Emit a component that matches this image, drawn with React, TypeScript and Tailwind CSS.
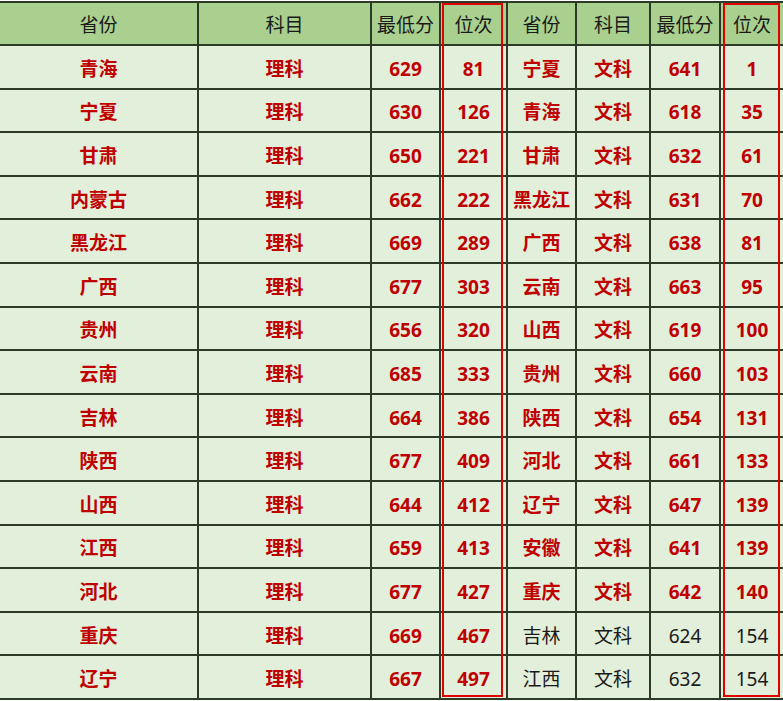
// Admission table: lowest scores and ranks per province, science (理科) and liberal arts (文科).

type Row = [string, string, string, string, string, string, string, string, boolean];

const rows: Row[] = [
  ["青海", "理科", "629", "81", "宁夏", "文科", "641", "1", true],
  ["宁夏", "理科", "630", "126", "青海", "文科", "618", "35", true],
  ["甘肃", "理科", "650", "221", "甘肃", "文科", "632", "61", true],
  ["内蒙古", "理科", "662", "222", "黑龙江", "文科", "631", "70", true],
  ["黑龙江", "理科", "669", "289", "广西", "文科", "638", "81", true],
  ["广西", "理科", "677", "303", "云南", "文科", "663", "95", true],
  ["贵州", "理科", "656", "320", "山西", "文科", "619", "100", true],
  ["云南", "理科", "685", "333", "贵州", "文科", "660", "103", true],
  ["吉林", "理科", "664", "386", "陕西", "文科", "654", "131", true],
  ["陕西", "理科", "677", "409", "河北", "文科", "661", "133", true],
  ["山西", "理科", "644", "412", "辽宁", "文科", "647", "139", true],
  ["江西", "理科", "659", "413", "安徽", "文科", "641", "139", true],
  ["河北", "理科", "677", "427", "重庆", "文科", "642", "140", true],
  ["重庆", "理科", "669", "467", "吉林", "文科", "624", "154", false],
  ["辽宁", "理科", "667", "497", "江西", "文科", "632", "154", false],
];

const headers = ["省份", "科目", "最低分", "位次", "省份", "科目", "最低分", "位次"];
const widths = [198, 173, 69, 67, 69, 74, 70, 63];

const red = "text-[#c00000] font-bold";
const plain = "text-[#1a1a1a] font-normal";

export default function App() {
  return (
    <div
      className="relative w-[783px] h-[701px] bg-white overflow-hidden"
      style={{ fontFamily: '"Noto Sans", "Noto Sans CJK SC", sans-serif' }}
    >
      <table className="mt-[1px] w-[783px] table-fixed border-collapse text-[19px] leading-none">
        <colgroup>
          {widths.map((w, i) => (
            <col key={i} style={{ width: w }} />
          ))}
        </colgroup>
        <thead>
          <tr className="h-[43px] bg-[#a9d08e]">
            {headers.map((h, i) => (
              <th
                key={i}
                className="border-2 border-[#2c3a28] pt-[3px] first:border-l-0 last:border-r-0 font-normal text-[#1a1a1a] text-center"
              >
                {h}
              </th>
            ))}
          </tr>
        </thead>
        <tbody>
          {rows.map((r) => {
            const tone = r[8] ? red : plain;
            return (
              <tr key={r[0] + r[4]} className="h-[43.6px] bg-[#e2efda]">
                {r.slice(0, 8).map((c, i) => (
                  <td
                    key={i}
                    className={`border-2 border-[#2c3a28] pt-[5px] text-center first:border-l-0 last:border-r-0 ${
                      i < 4 ? red : tone
                    }`}
                  >
                    {c as string}
                  </td>
                ))}
              </tr>
            );
          })}
        </tbody>
      </table>

      {/* red highlight frames around the 位次 columns */}
      <div className="pointer-events-none absolute left-[442px] top-[3px] w-[61px] h-[694px] border-2 border-[#e00000]" />
      <div className="pointer-events-none absolute left-[723px] top-[3px] w-[57px] h-[694px] border-2 border-[#e00000]" />
    </div>
  );
}
